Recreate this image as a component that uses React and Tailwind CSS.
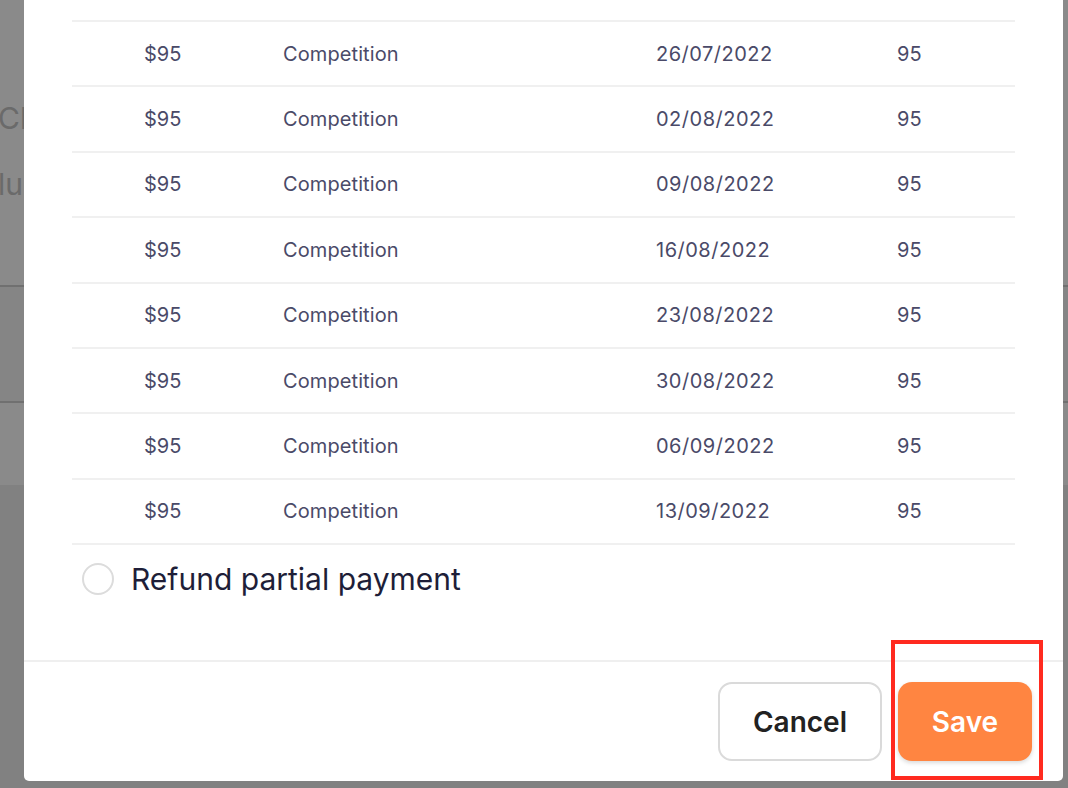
import React from 'react';

const rows = [
    '26/07/2022',
    '02/08/2022',
    '09/08/2022',
    '16/08/2022',
    '23/08/2022',
    '30/08/2022',
    '06/09/2022',
    '13/09/2022',
];

const App = () => {
    return (
        <div className="relative w-[1068px] h-[788px] overflow-hidden bg-white" style={{ fontFamily: 'Inter, "Noto Sans", sans-serif' }}>
            {/* page underneath the modal */}
            <div className="flex flex-col">
                <div className="h-[285px] pt-[98px] text-[#c4c4c4] text-[30px] leading-[40px]">
                    <p className="-ml-[2px]">Cl</p>
                    <p className="-ml-[2px] mt-[26px]">lu</p>
                </div>
                <div className="h-[118px] border-y-2 border-[#cfcfcf] bg-[#f5f5f5]"></div>
                <div className="h-[82px] bg-white"></div>
                <div className="h-[303px] bg-[#eeeeee]"></div>
            </div>

            {/* overlay */}
            <div className="absolute inset-0 bg-black/[0.46]">
                <div className="relative ml-[24px] w-[1039px] h-[781px] bg-white rounded-b-[5px] flex flex-col">
                    <div className="flex-1 px-[48px] pt-[20px]">
                        <div className="border-b-2 border-[#f0f0f0]">
                            {rows.map(date => (
                                <div
                                    key={date}
                                    className="h-[65.375px] flex items-center border-t-2 border-[#f0f0f0] text-[20px] text-[#4a4a68]"
                                >
                                    <span className="w-[211px] pl-[72px]">$95</span>
                                    <span className="w-[373px] tracking-[0.1px]">Competition</span>
                                    <span className="w-[241px] tracking-[0.5px]">{date}</span>
                                    <span>95</span>
                                </div>
                            ))}
                        </div>
                        <label className="flex items-center mt-[16px] ml-[10px] gap-[17px]">
                            <span className="w-[32px] h-[32px] rounded-full border-2 border-[#dcdcdc] bg-white"></span>
                            <span className="text-[30px] leading-[36px] text-[#1e1e38]">Refund partial payment</span>
                        </label>
                    </div>
                    <div className="border-t-2 border-[#efefef] flex justify-end gap-[16px] pt-[20px] pb-[20px] pr-[31px]">
                        <button className="w-[164px] h-[79px] rounded-[14px] border-2 border-[#dadada] bg-white text-[28px] font-semibold text-[#222222]">
                            Cancel
                        </button>
                        <button className="w-[134px] h-[79px] rounded-[14px] bg-[#ff8541] text-[28px] font-semibold text-white shadow-[0_2px_4px_rgba(0,0,0,0.15)]">
                            Save
                        </button>
                    </div>

                    {/* annotation box */}
                    <div className="absolute left-[867px] top-[640px] w-[152px] h-[140px] border-4 border-[#ff2a1f]"></div>
                </div>
            </div>
        </div>
    );
};

export default App;
